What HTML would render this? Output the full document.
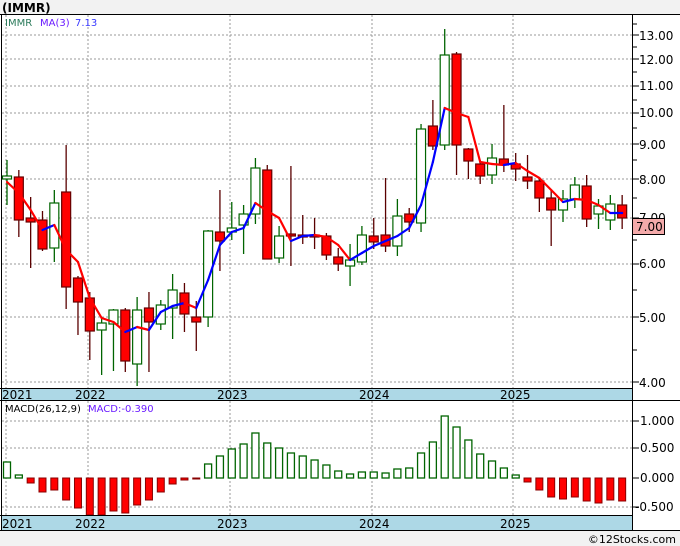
<!DOCTYPE html>
<html><head><meta charset="utf-8"><style>
html,body{margin:0;padding:0;background:#fff}
svg{display:block}
text{font-family:"DejaVu Sans","Liberation Sans",sans-serif}
</style></head><body>
<svg id="s" width="680" height="546" xmlns="http://www.w3.org/2000/svg">
<rect x="0" y="0" width="680" height="14" fill="#f2f2f2"/>
<text x="2" y="12" font-size="12" font-weight="bold" fill="#000">(IMMR)</text>
<rect x="0" y="531" width="680" height="15" fill="#f2f2f2"/>
<text x="676" y="543" font-size="11" text-anchor="end" fill="#000">©12Stocks.com</text>
<g id="grid" stroke="#999" stroke-width="1" stroke-dasharray="2,2" fill="none"></g>
<rect x="1" y="388" width="631" height="12" fill="#add8e6"/>
<rect x="1" y="515" width="631" height="15" fill="#add8e6"/>
<g font-size="12" fill="#000">
<text x="2" y="399">2021</text><text x="75" y="399">2022</text><text x="217" y="399">2023</text><text x="359" y="399">2024</text><text x="500" y="399">2025</text>
<text x="2" y="528">2021</text><text x="75" y="528">2022</text><text x="217" y="528">2023</text><text x="359" y="528">2024</text><text x="500" y="528">2025</text>
</g>
<g id="c"></g>
<g fill="none" stroke="#000" stroke-width="1">
<line x1="0" y1="14.5" x2="680" y2="14.5"/>
<line x1="1.5" y1="14" x2="1.5" y2="531"/>
<line x1="632.5" y1="14" x2="632.5" y2="531"/>
<line x1="0" y1="388.5" x2="632" y2="388.5"/>
<line x1="0" y1="400.5" x2="680" y2="400.5"/>
<line x1="0" y1="515.5" x2="632" y2="515.5"/>
<line x1="0" y1="530.5" x2="680" y2="530.5"/>
</g>
<g font-size="12" fill="#000">
<text x="639" y="40">13.00</text><text x="639" y="64">12.00</text><text x="639" y="90">11.00</text><text x="639" y="117">10.00</text>
<text x="639" y="149">9.00</text><text x="639" y="184">8.00</text><text x="639" y="222">7.00</text><text x="639" y="268">6.00</text>
<text x="639" y="322">5.00</text><text x="639" y="387">4.00</text>
<text x="640" y="425">1.000</text><text x="640" y="452">0.500</text><text x="640" y="482">0.000</text><text x="635" y="511">-0.500</text>
</g>
<rect x="632.5" y="218.5" width="32" height="16" fill="#f4aaaa" stroke="#000" stroke-width="1"/>
<text x="636" y="231" font-size="12" fill="#000">7.00</text>
<text x="5" y="26" font-size="10" fill="#2a7a5a">IMMR</text>
<text x="40" y="26" font-size="10" fill="#6a1aff">MA(3)</text>
<text x="75" y="26" font-size="10" fill="#3a3aff">7.13</text>
<text x="5" y="412" font-size="10" fill="#000">MACD(26,12,9)</text>
<text x="88" y="412" font-size="10" fill="#6a1aff">MACD:-0.390</text>
</svg>
<script>
var NS="http://www.w3.org/2000/svg",g=document.getElementById('grid'),c=document.getElementById('c');
function el(p,t,a){var e=document.createElementNS(NS,t);for(var k in a)e.setAttribute(k,a[k]);p.appendChild(e);return e;}
[35,59,86,113,144,179,218,264,317,382].forEach(function(y){el(g,'line',{x1:2,y1:y,x2:632,y2:y});});
[421,448,507].forEach(function(y){el(g,'line',{x1:2,y1:y,x2:632,y2:y});});
[6,88,230,372,513].forEach(function(x){el(g,'line',{x1:x,y1:15,x2:x,y2:388});el(g,'line',{x1:x,y1:401,x2:x,y2:515});});
var ax=el(c,'g',{stroke:'#000','stroke-width':1});
[24,47,72,100,128,160,198,240,290,350].forEach(function(y){el(ax,'line',{x1:632,y1:y,x2:637,y2:y});});
[35,59,86,113,144,179,218,264,317,382,421,448,478,507].forEach(function(y){el(ax,'line',{x1:632,y1:y,x2:639,y2:y});});
var d=[['g',176,179,160,205],['r',177,220,170,237],['r',218,222,197,268],['r',220,249,211,251],['g',203,248,190,262],['r',192,287,145,309],['r',278,302,276,335],['r',298,331,292,360],['g',323,330,318,375],['g',310,324,309,371],['r',310,361,308,372],['g',310,364,297,386],['r',308,322,292,372],['g',305,324,300,330],['g',290,308,274,339],['r',293,314,283,332],['r',317,322,301,351],['g',231,317,230,327],['r',232,241,190,271],['g',228,232,202,240],['g',214,225,205,254],['g',168,214,158,224],['r',170,259,165,259],['g',236,258,226,263],['r',234,236,166,266],['r',235,237,215,244],['r',235,236,218,249],['r',236,255,233,260],['r',257,264,248,271],['g',260,266,244,286],['g',235,262,226,265],['r',236,242,218,249],['r',235,246,178,252],['g',216,246,199,256],['r',214,222,208,232],['g',129,223,124,232],['r',126,146,100,150],['g',55,145,29,150],['r',54,145,52,175],['r',149,161,148,179],['r',164,176,160,184],['g',158,175,144,184],['r',159,165,105,172],['r',164,169,153,181],['r',177,181,155,189],['r',181,198,177,212],['r',198,210,190,246],['g',199,210,190,222],['g',185,199,177,208],['r',186,219,175,227],['g',206,214,199,229],['g',204,220,195,230],['r',205,218,195,229]];
function X(i){return 7+11.83*i;}
d.forEach(function(a,i){var x=X(i);var col=a[0]=='g'?'#006400':'#5a0000';
el(c,'line',{x1:x,y1:a[3],x2:x,y2:a[4],stroke:col,'stroke-width':1.3});
el(c,'rect',{x:x-4.5,y:a[1],width:9,height:Math.max(2,a[2]-a[1]),fill:a[0]=='g'?'#fff':'#f00',stroke:a[0]=='g'?'#006400':'#600',"stroke-width":1.2});});
var ma=[182,193,210,230,225,250,262,298,318,322,332,327,330,312,306,303,308,280,245,232,228,203,211,218,241,236,235,237,245,260,253,246,241,236,228,205,162,108,113,117,162,164,165,163,171,178,190,202,199,200,205,213,213];
for(var i=1;i<ma.length;i++){el(c,'line',{x1:X(i-1),y1:ma[i-1],x2:X(i),y2:ma[i],stroke:ma[i]>ma[i-1]?'#f00':'#00f','stroke-width':2.2,'stroke-linecap':'round'});}
var m=[16,3,-5,-14,-12,-22,-30,-37,-37,-33,-35,-27,-22,-14,-6,-2,-1,14,22,29,34,45,35,30,25,22,18,13,7,4,6,6,5,9,10,25,36,62,51,38,24,17,10,3,-4,-12,-19,-21,-19,-23,-25,-22,-23];
m.forEach(function(h,i){var x=X(i);if(h>=0)el(c,'rect',{x:x-3.5,y:478-h,width:7,height:h,fill:'#fff',stroke:'#006400','stroke-width':1.3});
else el(c,'rect',{x:x-3.5,y:478,width:7,height:-h,fill:i==16?'#8b0000':'#f00',stroke:'#800','stroke-width':1});});
</script>
</body></html>
